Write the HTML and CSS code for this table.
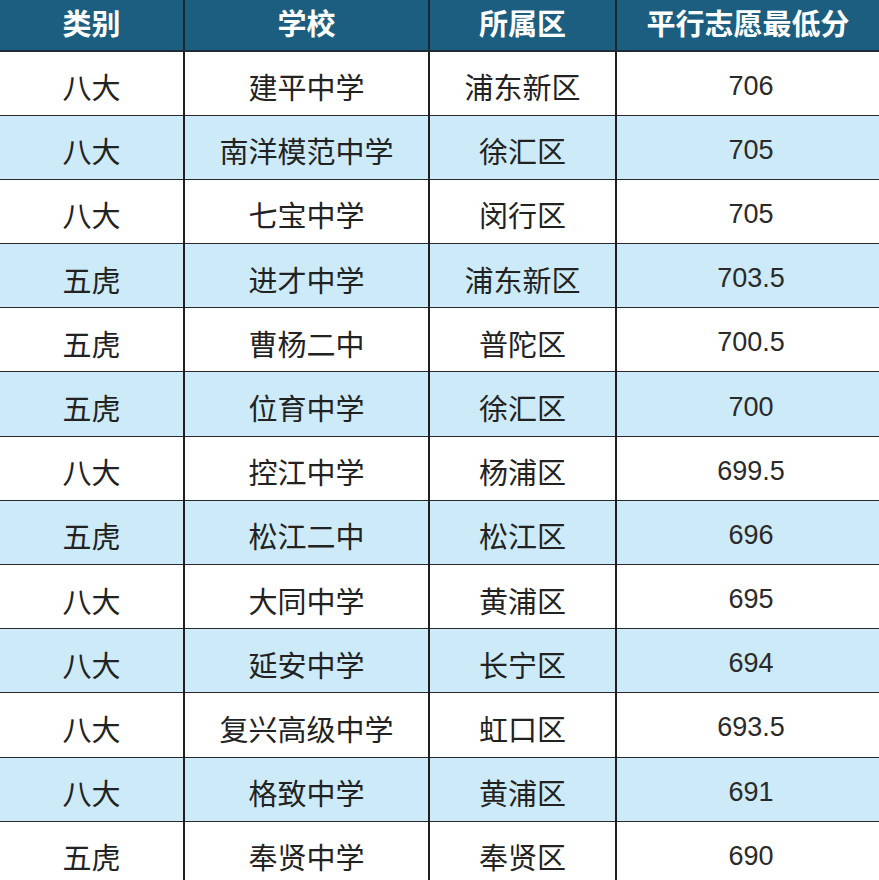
FILE: index.html
```html
<!DOCTYPE html>
<html lang="zh">
<head>
<meta charset="utf-8">
<link rel="stylesheet" href="styles.css">
</head>
<body>
<table class="grid">
  <colgroup>
    <col class="c1"><col class="c2"><col class="c3"><col class="c4">
  </colgroup>
  <thead>
    <tr><th>类别</th><th>学校</th><th>所属区</th><th>平行志愿最低分</th></tr>
  </thead>
  <tbody>
    <tr><td>八大</td><td>建平中学</td><td>浦东新区</td><td class="num">706</td></tr>
    <tr class="alt"><td>八大</td><td>南洋模范中学</td><td>徐汇区</td><td class="num">705</td></tr>
    <tr><td>八大</td><td>七宝中学</td><td>闵行区</td><td class="num">705</td></tr>
    <tr class="alt"><td>五虎</td><td>进才中学</td><td>浦东新区</td><td class="num">703.5</td></tr>
    <tr><td>五虎</td><td>曹杨二中</td><td>普陀区</td><td class="num">700.5</td></tr>
    <tr class="alt"><td>五虎</td><td>位育中学</td><td>徐汇区</td><td class="num">700</td></tr>
    <tr><td>八大</td><td>控江中学</td><td>杨浦区</td><td class="num">699.5</td></tr>
    <tr class="alt"><td>五虎</td><td>松江二中</td><td>松江区</td><td class="num">696</td></tr>
    <tr><td>八大</td><td>大同中学</td><td>黄浦区</td><td class="num">695</td></tr>
    <tr class="alt"><td>八大</td><td>延安中学</td><td>长宁区</td><td class="num">694</td></tr>
    <tr><td>八大</td><td>复兴高级中学</td><td>虹口区</td><td class="num">693.5</td></tr>
    <tr class="alt"><td>八大</td><td>格致中学</td><td>黄浦区</td><td class="num">691</td></tr>
    <tr><td>五虎</td><td>奉贤中学</td><td>奉贤区</td><td class="num">690</td></tr>
  </tbody>
</table>
</body>
</html>
```
FILE: styles.css
```css
html, body {
  margin: 0;
  padding: 0;
  background: #ffffff;
}
body {
  width: 879px;
  height: 880px;
  overflow: hidden;
  font-family: "Liberation Sans", "Noto Sans CJK SC", sans-serif;
}
.grid {
  width: 879px;
  border-collapse: collapse;
  table-layout: fixed;
}
.c1 { width: 184px; }
.c2 { width: 245px; }
.c3 { width: 187px; }
.c4 { width: 263px; }
.grid th {
  height: 51px;
  padding: 0 0 6px 0;
  background: #1b5e80;
  color: #ffffff;
  font-weight: bold;
  font-size: 29px;
  text-align: center;
  vertical-align: middle;
  border-left: 2px solid #1a2a33;
  border-bottom: 2px solid #1c2b34;
  box-sizing: border-box;
}
.grid td {
  height: 64.2px;
  padding: 6px 0 0 0;
  font-size: 29px;
  color: #222222;
  text-align: center;
  vertical-align: middle;
  border-left: 2px solid #1f1f1f;
  border-bottom: 1.5px solid #2a2a2a;
  box-sizing: border-box;
}
.grid th:first-child, .grid td:first-child {
  border-left: none;
}
.grid td.num {
  padding-left: 6px;
  font-size: 27px;
  color: #2a2a2a;
}
.grid tr.alt td {
  background: #cdeaf8;
}
```
